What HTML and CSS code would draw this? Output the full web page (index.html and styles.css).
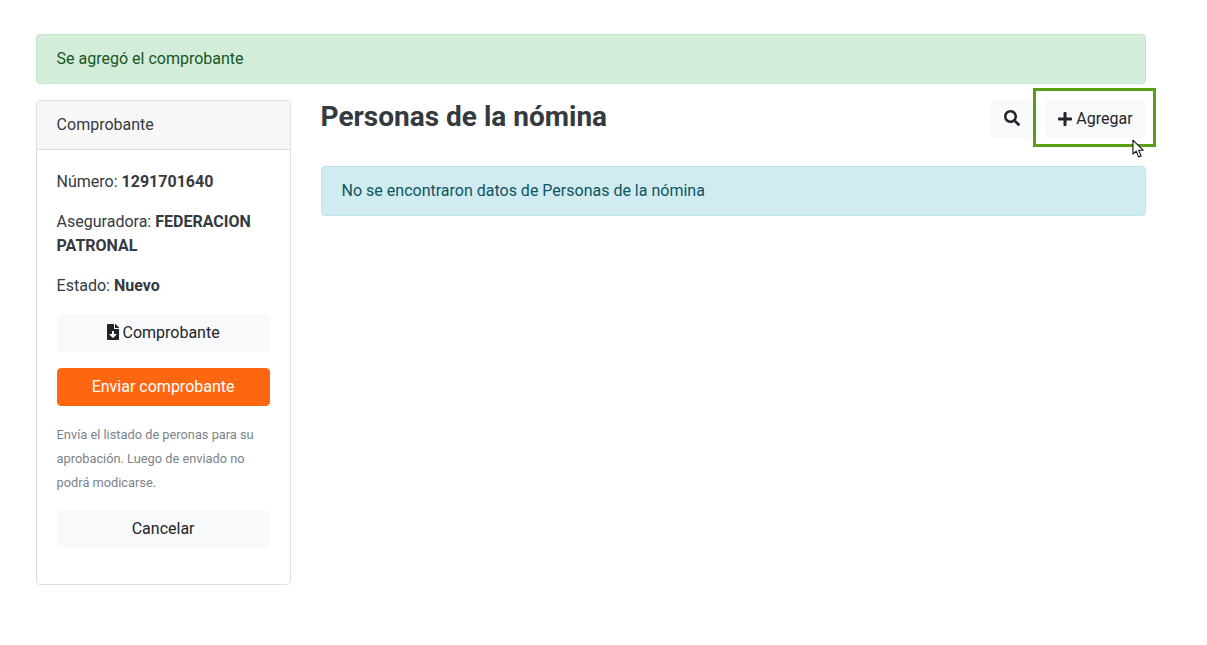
FILE: index.html
```html
<!DOCTYPE html>
<html lang="es">
<head>
<meta charset="utf-8">
<title>Personas de la nómina</title>
<link rel="stylesheet" href="styles.css">
</head>
<body>
<div class="page">
  <div class="alert alert-success">Se agregó el comprobante</div>
  <div class="columns">
    <aside class="card">
      <div class="card-header">Comprobante</div>
      <div class="card-body">
        <p>Número: <b>1291701640</b></p>
        <p>Aseguradora: <b>FEDERACION PATRONAL</b></p>
        <p>Estado: <b>Nuevo</b></p>
        <a class="btn btn-light btn-block">
          <svg class="icon-file" viewBox="0 0 384 512" aria-hidden="true"><path fill="#212529" d="M224 136V0H24C10.700 0 0 10.700 0 24v464c0 13.300 10.700 24 24 24h336c13.300 0 24-10.700 24-24V160H248c-13.200 0-24-10.800-24-24zm76.450 211.360l-96.420 95.700c-6.650 6.610-17.390 6.610-24.040 0l-96.420-95.700C73.420 337.290 80.540 320 94.820 320H160v-80c0-8.840 7.160-16 16-16h32c8.840 0 16 7.160 16 16v80h65.180c14.280 0 21.400 17.290 11.270 27.360zM377 105L279.100 7c-4.500-4.500-10.600-7-17-7H256v128h128v-6.100c0-6.300-2.500-12.400-7-16.900z"/></svg>
          Comprobante
        </a>
        <a class="btn btn-orange btn-block">Enviar comprobante</a>
        <p class="help">Envía el listado de peronas para su aprobación. Luego de enviado no podrá modicarse.</p>
        <a class="btn btn-light btn-block">Cancelar</a>
      </div>
    </aside>
    <main class="content">
      <div class="title-row">
        <h1>Personas de la nómina</h1>
        <div class="actions">
          <a class="btn btn-light btn-action">
            <svg class="icon-search" viewBox="0 0 512 512" aria-hidden="true"><path fill="#212529" d="M505 442.700L405.300 343c-4.500-4.500-10.600-7-17-7H372c27.600-35.300 44-79.700 44-128C416 93.100 322.900 0 208 0S0 93.100 0 208s93.100 208 208 208c48.300 0 92.700-16.400 128-44v16.300c0 6.400 2.500 12.500 7 17l99.700 99.700c9.400 9.400 24.600 9.400 33.900 0l28.300-28.300c9.400-9.400 9.400-24.600.1-34zM208 336c-70.700 0-128-57.200-128-128 0-70.700 57.200-128 128-128 70.700 0 128 57.200 128 128 0 70.700-57.200 128-128 128z"/></svg>
          </a>
          <a class="btn btn-light btn-action">
            <svg class="icon-plus" viewBox="0 0 448 512" aria-hidden="true"><path fill="#212529" d="M416 208H272V64c0-17.670-14.330-32-32-32h-32c-17.670 0-32 14.330-32 32v144H32c-17.670 0-32 14.330-32 32v32c0 17.670 14.330 32 32 32h144v144c0 17.670 14.330 32 32 32h32c17.670 0 32-14.330 32-32V304h144c17.670 0 32-14.330 32-32v-32c0-17.670-14.330-32-32-32z"/></svg>
            Agregar
          </a>
        </div>
      </div>
      <div class="alert alert-info">No se encontraron datos de Personas de la nómina</div>
    </main>
  </div>
</div>
<div class="highlight"></div>
<svg class="cursor" viewBox="0 0 14 21" aria-hidden="true"><path fill="#fff" stroke="#111" stroke-width="1.200" stroke-linejoin="round" d="M1 1v15l3.500-3.200 2.600 6.200 2.700-1.100-2.600-6.100H12z"/></svg>
</body>
</html>
```

FILE: styles.css
```css
* { box-sizing: border-box; }
html, body { margin: 0; padding: 0; }
body {
  background: #fff;
  color: #343a40;
  font-family: Roboto, "Liberation Sans", sans-serif;
  font-size: 16px;
  line-height: 24px;
}
.page { width: 1110px; margin-left: 35.600px; padding-top: 34px; }
.alert {
  padding: 12px 20px;
  border: 1px solid transparent;
  border-radius: 4px;
  margin-bottom: 16px;
}
.alert-success { background: #d4edda; border-color: #c3e6cb; color: #155724; }
.alert-info { background: #d1ecf1; border-color: #bee5eb; color: #0c5460; }
.columns { display: flex; gap: 30px; align-items: flex-start; }
.card {
  width: 255px;
  flex: none;
  height: 485px;
  border: 1px solid #dfdfdf;
  border-radius: 4px;
}
.card-header {
  padding: 12px 20px;
  background: #f7f7f7;
  border-bottom: 1px solid #dfdfdf;
  border-radius: 3px 3px 0 0;
}
.card-body { padding: 20px; }
.card-body p { margin: 0 0 16px; }
.card-body b { font-weight: 700; }
.card-body .help {
  font-size: 12.800px;
  color: #7b838b;
  margin-top: 17px;
  margin-bottom: 15px;
}
.btn {
  display: inline-block;
  padding: 6px 13px 8px;
  height: 38px;
  line-height: 24px;
  border: 1px solid transparent;
  border-radius: 4px;
  text-align: center;
  color: #212529;
}
.btn-block { display: block; margin-bottom: 16px; }
.btn-light { background: #f8f9fa; border-color: #f8f9fa; }
.btn-orange { background: #ff6610; border-color: #ff6610; color: #fff; }
.content { flex: 1; min-width: 0; }
.title-row { display: flex; justify-content: space-between; height: 66px; }
h1 { margin: 0; font-size: 28px; line-height: 33.600px; font-weight: 700; color: #343a40; }
.actions { display: flex; gap: 12px; align-items: flex-start; }
.btn-action { padding: 6px 12px 8px; }
svg { display: inline-block; }
.icon-search { width: 16px; height: 16px; vertical-align: -2px; }
.icon-plus { width: 14px; height: 16px; vertical-align: -3px; }
.icon-file { width: 12px; height: 16px; vertical-align: -2px; }
.highlight {
  position: absolute;
  left: 1033px;
  top: 88px;
  width: 123px;
  height: 59px;
  border: 3px solid #5a9e12;
}
.cursor {
  position: absolute;
  left: 1132px;
  top: 139px;
  width: 13px;
  height: 20px;
}
```
